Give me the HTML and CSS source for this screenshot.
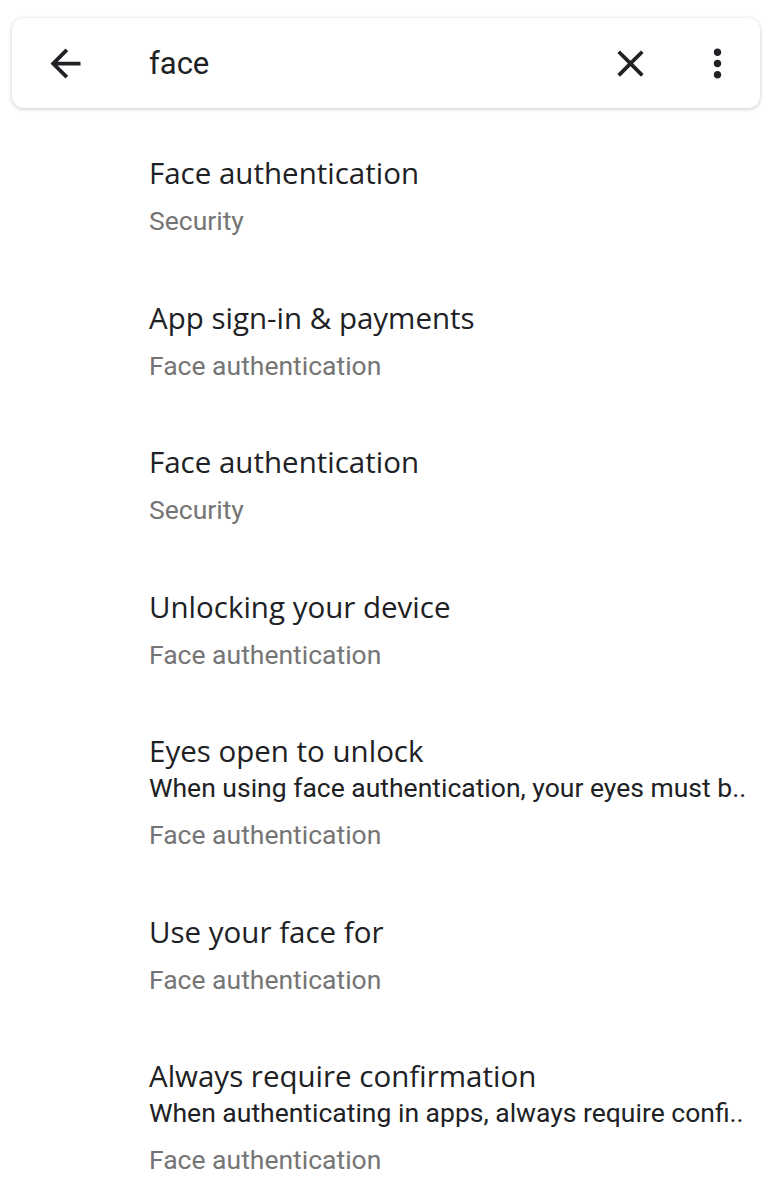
FILE: index.html
```html
<!DOCTYPE html>
<html>
	<head>
		<meta charset="utf-8">
		<title>Search settings</title>
		<link rel="stylesheet" href="styles.css">
	</head>
	<body>
		<div class="search-bar">
			<svg class="icon icon-back" viewBox="0 0 24 24">
				<path d="M20 11H7.83l5.59-5.59L12 4l-8 8 8 8 1.41-1.41L7.83 13H20v-2z"/>
			</svg>
			<div class="search-text">face</div>
			<svg class="icon icon-clear" viewBox="0 0 24 24">
				<path d="M19 6.41L17.59 5 12 10.59 6.41 5 5 6.41 10.59 12 5 17.59 6.41 19 12 13.41 17.59 19 19 17.59 13.41 12z"/>
			</svg>
			<svg class="icon icon-more" viewBox="0 0 24 24">
				<path d="M12 8c1.1 0 2-.9 2-2s-.9-2-2-2-2 .9-2 2 .9 2 2 2zm0 2c-1.1 0-2 .9-2 2s.9 2 2 2 2-.9 2-2-.9-2-2-2zm0 6c-1.1 0-2 .9-2 2s.9 2 2 2 2-.9 2-2-.9-2-2-2z"/>
			</svg>
		</div>

		<div class="results">
			<div class="result">
				<div class="result-title">Face authentication</div>
				<div class="result-path">Security</div>
			</div>
			<div class="result">
				<div class="result-title">App sign-in &amp; payments</div>
				<div class="result-path">Face authentication</div>
			</div>
			<div class="result">
				<div class="result-title">Face authentication</div>
				<div class="result-path">Security</div>
			</div>
			<div class="result">
				<div class="result-title">Unlocking your device</div>
				<div class="result-path">Face authentication</div>
			</div>
			<div class="result">
				<div class="result-title">Eyes open to unlock</div>
				<div class="result-summary">When using face authentication, your eyes must b..</div>
				<div class="result-path">Face authentication</div>
			</div>
			<div class="result">
				<div class="result-title">Use your face for</div>
				<div class="result-path">Face authentication</div>
			</div>
			<div class="result">
				<div class="result-title">Always require confirmation</div>
				<div class="result-summary">When authenticating in apps, always require confi..</div>
				<div class="result-path">Face authentication</div>
			</div>
		</div>
	</body>
</html>
```

FILE: styles.css
```css
body {
	margin: 0;
	background: #ffffff;
	font-family: Roboto, "Liberation Sans", sans-serif;
	color: #202124;
}

.search-bar {
	display: flex;
	align-items: center;
	height: 90px;
	margin: 18px 12px 0 12px;
	border-radius: 12px;
	background: #ffffff;
	box-shadow: 0 1px 4px rgba(0, 0, 0, 0.22);
}

.icon {
	width: 45px;
	height: 45px;
	flex: none;
	fill: #202124;
}

.icon-back {
	margin-left: 31px;
}

.search-text {
	flex: 1;
	margin-left: 61px;
	font-size: 31px;
	color: #202124;
}

.icon-clear {
	margin-right: 42px;
}

.icon-more {
	margin-right: 20px;
}

.results {
	padding: 47px 0 0 149px;
}

.result {
	padding-bottom: 61.5px;
}

.result-title {
	font-family: "Open Sans", Roboto, sans-serif;
	font-size: 29.5px;
	line-height: 36px;
	color: #202124;
}

.result-summary {
	margin-top: 2px;
	font-size: 26.5px;
	line-height: 34px;
	color: #202124;
	white-space: nowrap;
}

.result-path {
	margin-top: 13px;
	font-size: 26.5px;
	line-height: 34px;
	color: #757575;
}
```
